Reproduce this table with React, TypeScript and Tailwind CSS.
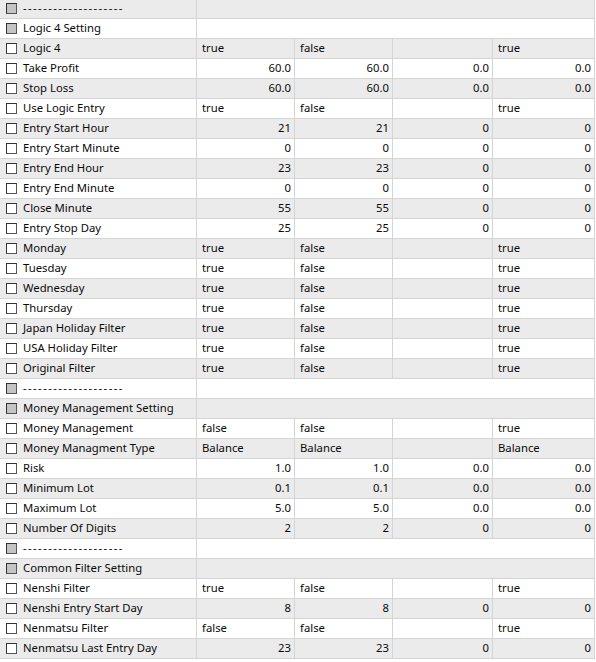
type Kind = "head" | "text" | "num";
type Row = { label: string; kind: Kind; vals?: string[] };

const TF = ["true", "false", "", "true"];
const DASH = "--------------------";

const rows: Row[] = [
  { label: DASH, kind: "head" },
  { label: "Logic 4 Setting", kind: "head" },
  { label: "Logic 4", kind: "text", vals: TF },
  { label: "Take Profit", kind: "num", vals: ["60.0", "60.0", "0.0", "0.0"] },
  { label: "Stop Loss", kind: "num", vals: ["60.0", "60.0", "0.0", "0.0"] },
  { label: "Use Logic Entry", kind: "text", vals: TF },
  { label: "Entry Start Hour", kind: "num", vals: ["21", "21", "0", "0"] },
  { label: "Entry Start Minute", kind: "num", vals: ["0", "0", "0", "0"] },
  { label: "Entry End Hour", kind: "num", vals: ["23", "23", "0", "0"] },
  { label: "Entry End Minute", kind: "num", vals: ["0", "0", "0", "0"] },
  { label: "Close Minute", kind: "num", vals: ["55", "55", "0", "0"] },
  { label: "Entry Stop Day", kind: "num", vals: ["25", "25", "0", "0"] },
  { label: "Monday", kind: "text", vals: TF },
  { label: "Tuesday", kind: "text", vals: TF },
  { label: "Wednesday", kind: "text", vals: TF },
  { label: "Thursday", kind: "text", vals: TF },
  { label: "Japan Holiday Filter", kind: "text", vals: TF },
  { label: "USA Holiday Filter", kind: "text", vals: TF },
  { label: "Original Filter", kind: "text", vals: TF },
  { label: DASH, kind: "head" },
  { label: "Money Management Setting", kind: "head" },
  { label: "Money Management", kind: "text", vals: ["false", "false", "", "true"] },
  { label: "Money Managment Type", kind: "text", vals: ["Balance", "Balance", "", "Balance"] },
  { label: "Risk", kind: "num", vals: ["1.0", "1.0", "0.0", "0.0"] },
  { label: "Minimum Lot", kind: "num", vals: ["0.1", "0.1", "0.0", "0.0"] },
  { label: "Maximum Lot", kind: "num", vals: ["5.0", "5.0", "0.0", "0.0"] },
  { label: "Number Of Digits", kind: "num", vals: ["2", "2", "0", "0"] },
  { label: DASH, kind: "head" },
  { label: "Common Filter Setting", kind: "head" },
  { label: "Nenshi Filter", kind: "text", vals: TF },
  { label: "Nenshi Entry Start Day", kind: "num", vals: ["8", "8", "0", "0"] },
  { label: "Nenmatsu Filter", kind: "text", vals: ["false", "false", "", "true"] },
  { label: "Nenmatsu Last Entry Day", kind: "num", vals: ["23", "23", "0", "0"] },
];

const colW = ["w-[98px]", "w-[98px]", "w-[100px]", "w-[101px]"];

function Check({ grey }: { grey: boolean }) {
  return (
    <div
      className={`w-[11px] h-[11px] shrink-0 border border-t-[#333] border-l-[#333] border-r-[#555] border-b-[#555] ${
        grey ? "bg-[#c4c4c4]" : "bg-white"
      }`}
    />
  );
}

export default function App() {
  return (
    <div
      className="w-[596px] h-[662px] overflow-hidden bg-white text-[11.3px] text-[#0a0a0a]"
      style={{ fontFamily: '"Segoe UI", "Noto Sans", sans-serif' }}
    >
      <div className="-mt-px w-[595px] border-r border-[#d4d4d4]">
        {rows.map((r, i) => (
          <div
            key={i}
            className={`flex h-[20px] border-b border-[#d4d4d4] ${i % 2 === 0 ? "bg-[#ebebeb]" : "bg-white"}`}
          >
            <div className="flex items-center w-[197px] shrink-0 border-r border-[#d4d4d4] pl-[6px]">
              <Check grey={r.kind === "head"} />
              <span
                className={`ml-[6px] -mt-px whitespace-nowrap leading-none ${r.label === DASH ? "tracking-[1.4px]" : ""}`}
              >
                {r.label}
              </span>
            </div>
            {r.kind !== "head" &&
              r.vals!.map((v, j) => (
                <div
                  key={j}
                  className={`flex items-center shrink-0 ${colW[j]} ${j < 3 ? "border-r border-[#d4d4d4]" : ""} ${
                    r.kind === "num" ? "justify-end pr-[3px]" : "pl-[5px]"
                  }`}
                >
                  <span className="-mt-px leading-none whitespace-nowrap">{v}</span>
                </div>
              ))}
          </div>
        ))}
      </div>
    </div>
  );
}
